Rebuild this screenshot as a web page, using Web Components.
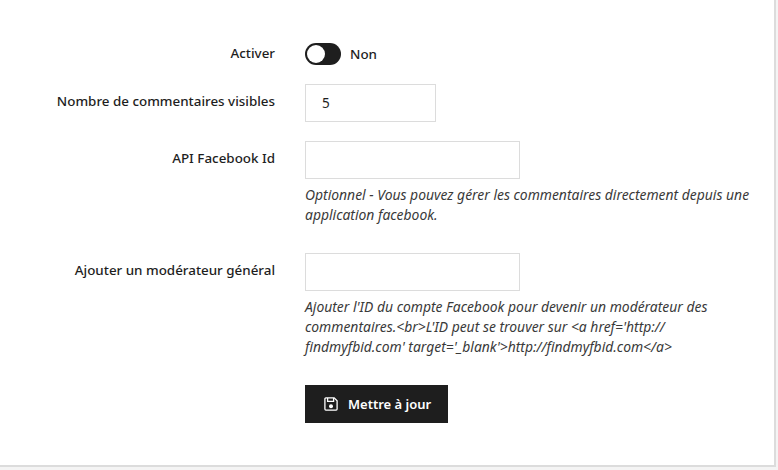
<!DOCTYPE html>
<html lang="fr">
<head>
<meta charset="utf-8">
<title>Commentaires</title>
<style>
  html, body { margin: 0; height: 100%; background: #f4f4f4; overflow: hidden; }
  body { font-family: "Noto Sans", "Liberation Sans", sans-serif; color: #1e1e1e; }
</style>
</head>
<body>
<settings-card>
  <form-row label="Activer" compact><toggle-switch text="Non"></toggle-switch></form-row>
  <form-row label="Nombre de commentaires visibles"><text-field value="5" width="131"></text-field></form-row>
  <form-row label="API Facebook Id"><text-field width="215"></text-field><span slot="help">Optionnel - Vous pouvez gérer les commentaires directement depuis une application facebook.</span></form-row>
  <form-row label="Ajouter un modérateur général"><text-field width="215"></text-field><span slot="help">Ajouter l'ID du compte Facebook pour devenir un modérateur des commentaires.&lt;br&gt;L'ID peut se trouver sur &lt;a href='http://<wbr>findmyfbid.com' target='_blank'&gt;http://findmyfbid.com&lt;/a&gt;</span></form-row>
  <form-row><save-button>Mettre à jour</save-button></form-row>
</settings-card>
<script>
class SettingsCard extends HTMLElement {
  constructor() {
    super();
    this.attachShadow({ mode: "open" });
    this.shadowRoot.innerHTML = `
      <style>
        :host { display: block; box-sizing: border-box; width: 776px; height: 467px; padding: 43px 0 0; background: #fff; border-right: 2px solid #dcdcdc; border-bottom: 2px solid #dcdcdc; }
      </style>
      <slot></slot>`;
  }
}

class FormRow extends HTMLElement {
  constructor() {
    super();
    this.attachShadow({ mode: "open" });
  }
  connectedCallback() {
    const label = this.getAttribute("label") || "";
    const hasHelp = this.querySelector("[slot=help]");
    this.shadowRoot.innerHTML = `
      <style>
        :host { display: grid; grid-template-columns: 275px 450px; column-gap: 30px; margin-bottom: 19px; }
        .label { font-size: 13.4px; font-weight: 500; line-height: 20px; text-align: right; padding-top: 7px; }
        :host([compact]) .label { padding-top: 0; }
        .help { font-size: 13.9px; font-style: italic; line-height: 20px; color: #3a3a3a; margin: 6px 0 9px; }
      </style>
      <div class="label">${label}</div>
      <div><slot></slot>${hasHelp ? '<div class="help"><slot name="help"></slot></div>' : ""}</div>`;
  }
}

class ToggleSwitch extends HTMLElement {
  constructor() {
    super();
    this.attachShadow({ mode: "open" });
  }
  connectedCallback() {
    this.shadowRoot.innerHTML = `
      <style>
        :host { display: flex; align-items: center; gap: 9px; height: 22px; }
        .track { box-sizing: border-box; width: 36px; height: 22px; border-radius: 11px; background: #1e1e1e; padding: 2px; }
        .knob { width: 18px; height: 18px; border-radius: 50%; background: #fff; }
        span { font-size: 13.4px; font-weight: 500; }
      </style>
      <div class="track"><div class="knob"></div></div>
      <span>${this.getAttribute("text")}</span>`;
  }
}

class TextField extends HTMLElement {
  constructor() {
    super();
    this.attachShadow({ mode: "open" });
  }
  connectedCallback() {
    this.shadowRoot.innerHTML = `
      <style>
        :host { display: block; }
        input { display: block; box-sizing: border-box; width: ${this.getAttribute("width")}px; height: 38px; padding: 0 16px; border: 1px solid #dcdcdc; border-radius: 0; background: #fff; color: #1e1e1e; font: 13.5px "Noto Sans", "Liberation Sans", sans-serif; outline: none; }
      </style>
      <input type="text" value="${this.getAttribute("value") || ""}">`;
  }
}

class SaveButton extends HTMLElement {
  constructor() {
    super();
    this.attachShadow({ mode: "open" });
    this.shadowRoot.innerHTML = `
      <style>
        :host { display: inline-flex; align-items: center; gap: 10px; height: 38px; padding: 0 17px 0 19px; background: #1e1e1e; color: #fff; font-size: 13px; font-weight: 650; }
        svg { width: 14px; height: 14px; display: block; }
      </style>
      <svg viewBox="0 0 14 14" fill="none" stroke="#fff" stroke-width="1.3">
        <path d="M1.9 .9h8.3l2.9 2.9v8.3a1 1 0 0 1-1 1H1.9a1 1 0 0 1-1-1V1.9a1 1 0 0 1 1-1z"/>
        <path d="M3.6 1v3.3h6V1"/>
        <circle cx="7" cy="9.2" r="2" fill="#fff" stroke="none"/>
      </svg>
      <slot></slot>`;
  }
}

customElements.define("settings-card", SettingsCard);
customElements.define("form-row", FormRow);
customElements.define("toggle-switch", ToggleSwitch);
customElements.define("text-field", TextField);
customElements.define("save-button", SaveButton);
</script>
</body>
</html>
